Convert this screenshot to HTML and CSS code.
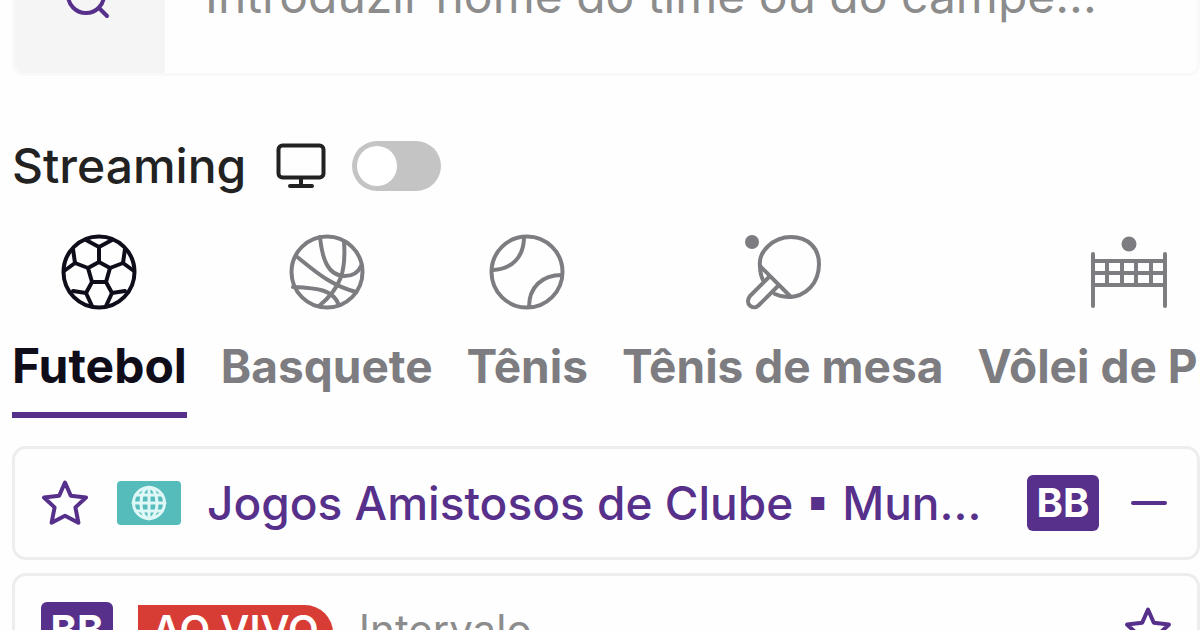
FILE: index.html
```html
<!DOCTYPE html>
<html lang="pt-BR">
<head>
    <meta charset="UTF-8">
    <meta name="viewport" content="width=device-width, initial-scale=1.0">
    <title>Apostas ao vivo</title>
    <link rel="stylesheet" href="styles.css">
</head>
<body>
<svg class="sprite" aria-hidden="true">
    <symbol id="star" viewBox="0 0 48 48">
        <path d="M24 3.500l5.800 13.300 15.200 1.700-10.600 9.900 3 15.300L24 36.800 10.600 43.700l3-15.300L3 18.500l15.200-1.700z"/>
    </symbol>
</svg>
<div class="page">
    <form class="search">
        <button class="search-button" type="submit" aria-label="Buscar">
            <svg class="search-icon" viewBox="0 0 48 48">
                <circle cx="20" cy="19" r="18"/>
                <path d="M33 32l8 8"/>
            </svg>
        </button>
        <input class="search-input" type="text" aria-label="Buscar" placeholder="Introduzir nome do time ou do campe...">
    </form>

    <div class="streaming">
        <label for="streaming">Streaming</label>
        <svg class="monitor" viewBox="0 0 50 46">
            <rect x="2.500" y="2.500" width="45" height="32" rx="4"/>
            <path d="M25 35v7M14 43h22"/>
        </svg>
        <input class="toggle" type="checkbox" id="streaming">
    </div>

    <nav class="sports">
        <a class="sport active" href="#futebol">
            <svg viewBox="0 0 76 76">
                <circle cx="38" cy="38" r="35.500"/>
                <path d="M38 28l11 6-4 14H31l-4-14z"/>
                <path d="M38 28V13M49 34l13-5M45 48l6 11M31 48l-6 11M27 34l-13-5"/>
                <path d="M25 6l13 7 13-7M64 15l-2 14 11 8M12 15l2 14L3 37M64 57l-13 2-6 13M12 57l13 2 6 13"/>
            </svg>
            <span>Futebol</span>
        </a>
        <a class="sport" href="#basquete">
            <svg viewBox="0 0 76 76">
                <circle cx="38" cy="38" r="35.500"/>
                <path d="M31 3c2 20 7 39 25 39 8 0 13-3 16-10M55 7c2 29-2 46-25 65M7 22c20 16 34 29 60 36M4 53c26 1 40 3 46 18"/>
            </svg>
            <span>Basquete</span>
        </a>
        <a class="sport" href="#tenis">
            <svg viewBox="0 0 76 76">
                <circle cx="38" cy="38" r="35.500"/>
                <path d="M35 3c0 20-12 32-31 33M73 41c-20 0-33 12-33 32"/>
            </svg>
            <span>Tênis</span>
        </a>
        <a class="sport" href="#tenis-de-mesa">
            <svg viewBox="0 0 76 76">
                <circle class="solid" cx="7" cy="8" r="7"/>
                <path d="M15 32C13 18 28 3 46 3c17 0 28 11 28 27 0 19-13 33-31 33-5 0-9-1-13-3"/>
                <path d="M15 32l31 31M15 32c0 7 1 11 4 16M24 43L5 62c-6 8 3 15 9 9l20-20"/>
            </svg>
            <span>Tênis de mesa</span>
        </a>
        <a class="sport" href="#volei">
            <svg viewBox="0 0 76 76">
                <circle class="solid" cx="38" cy="10" r="7.500"/>
                <path d="M2 20v52M74 20v52M2 27h72M2 39h72M2 51h72M16 27v24M31 27v24M45 27v24M60 27v24"/>
            </svg>
            <span>Vôlei de Praia</span>
        </a>
    </nav>

    <section class="card">
        <button class="icon-button" type="button" aria-label="Favoritar campeonato">
            <svg class="star"><use href="#star"/></svg>
        </button>
        <span class="flag">
            <svg viewBox="0 0 36 36">
                <circle cx="18" cy="18" r="15.500"/>
                <ellipse cx="18" cy="18" rx="8" ry="15.500"/>
                <path d="M18 2v32M2 18h32M5 10h26M5 26h26"/>
            </svg>
        </span>
        <h2 class="league">Jogos Amistosos de Clube ▪ Mun...</h2>
        <span class="badge">BB</span>
        <button class="icon-button" type="button" aria-label="Recolher">
            <svg class="minus" viewBox="0 0 36 36"><path d="M2 18h32"/></svg>
        </button>
    </section>

    <section class="card">
        <span class="badge">BB</span>
        <span class="live">AO VIVO</span>
        <span class="status">Intervalo</span>
        <button class="icon-button" type="button" aria-label="Favoritar jogo">
            <svg class="star"><use href="#star"/></svg>
        </button>
    </section>
</div>
</body>
</html>
```
FILE: styles.css
```css
* {
    box-sizing: border-box;
}
body {
    margin: 0;
    overflow: hidden;
    background: #fefefe;
    color: #222;
    font-family: Inter, "Liberation Sans", sans-serif;
    font-size: 46px;
    line-height: 56px;
}
svg {
    display: block;
    flex: none;
    overflow: visible;
    fill: none;
    stroke: currentColor;
    stroke-width: 4;
    stroke-linecap: round;
    stroke-linejoin: round;
}
button {
    padding: 0;
    border: none;
    background: none;
    color: #56308a;
    cursor: pointer;
}
.sprite {
    display: none;
}
.page {
    margin-top: -76px;
    padding-left: 12px;
}

/* search */
.search {
    display: flex;
    height: 152px;
    border: 3px solid #f9f9f9;
    border-radius: 12px;
    overflow: hidden;
}
.search-button {
    display: flex;
    flex: none;
    align-items: center;
    justify-content: center;
    width: 150px;
    background: #f5f5f5;
}
.search-icon {
    width: 48px;
    height: 48px;
}
.search-input {
    flex: 1;
    min-width: 0;
    padding: 0 40px 8px;
    border: none;
    outline: none;
    background: transparent;
    font: inherit;
    font-size: 48px;
}
.search-input::placeholder {
    color: #8c8c8c;
}

/* streaming */
.streaming {
    display: flex;
    align-items: center;
    margin-top: 62px;
    font-size: 48px;
    font-weight: 500;
}
.monitor {
    width: 50px;
    height: 46px;
    margin: 0 26px 0 30px;
}
.toggle {
    appearance: none;
    width: 89px;
    height: 50px;
    margin: 0;
    padding: 5px;
    border-radius: 25px;
    background: #c4c4c4;
}
.toggle::before {
    content: "";
    display: block;
    width: 40px;
    height: 40px;
    border-radius: 50%;
    background: #fff;
}
.toggle:checked {
    background: #56308a;
}
.toggle:checked::before {
    margin-left: auto;
}

/* sports */
.sports {
    display: flex;
    gap: 34px;
    margin-top: 40px;
    overflow: hidden;
}
.sport {
    display: flex;
    flex: none;
    flex-direction: column;
    align-items: center;
    gap: 28px;
    padding-bottom: 18px;
    border-bottom: 6px solid transparent;
    color: #7d7c80;
    font-weight: 700;
    text-decoration: none;
    white-space: nowrap;
}
.sport svg {
    width: 76px;
    height: 76px;
}
.sport.active {
    border-color: #56308a;
    color: #100d1a;
    font-size: 48px;
}
.sport .solid {
    fill: currentColor;
    stroke: none;
}

/* cards */
.card {
    display: flex;
    align-items: center;
    height: 114px;
    margin-top: 28px;
    padding: 0 30px 0 26px;
    border: 3px solid #ededed;
    border-radius: 14px;
}
.card + .card {
    margin-top: 13px;
    padding-right: 25px;
}
.star {
    width: 48px;
    height: 48px;
}
.flag {
    display: flex;
    align-items: center;
    justify-content: center;
    width: 64px;
    height: 44px;
    margin: 0 26px 0 28px;
    border-radius: 4px;
    background: #55bcbb;
    color: #dff8f7;
}
.flag svg {
    width: 36px;
    height: 36px;
    stroke-width: 3;
}
.league {
    flex: 1;
    min-width: 0;
    margin: 0;
    overflow: hidden;
    color: #56308a;
    font-size: 46px;
    font-weight: 500;
    white-space: nowrap;
}
.badge {
    width: 72px;
    border-radius: 6px;
    background: #56308a;
    color: #fff;
    font-size: 40px;
    font-weight: 700;
    text-align: center;
}
.minus {
    width: 36px;
    height: 36px;
    margin-left: 32px;
}
.live {
    margin: 0 26px 0 25px;
    padding: 0 14px;
    border-radius: 0 28px 0 0;
    background: #d73c35;
    color: #fff;
    font-size: 40px;
    font-weight: 600;
    line-height: 50px;
}
.status {
    flex: 1;
    color: #8c8c8c;
    font-size: 42px;
}
```
